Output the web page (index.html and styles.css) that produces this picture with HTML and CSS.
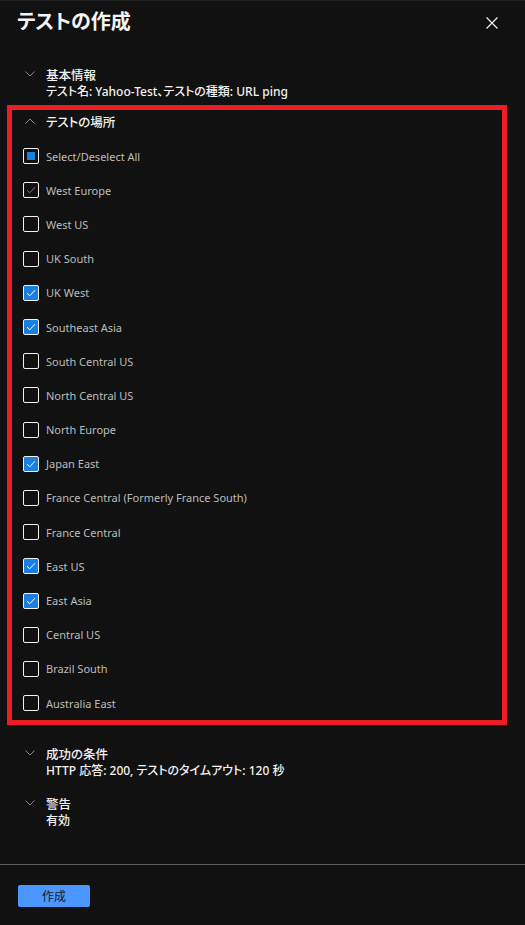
FILE: index.html
```html
<!DOCTYPE html>
<html lang="ja">
<head>
    <meta charset="UTF-8">
    <meta name="viewport" content="width=device-width, initial-scale=1.0">
    <title>テストの作成</title>
    <link rel="stylesheet" href="styles.css">
</head>
<body>
    <div class="panel">
        <div class="panel-header">
            <h1>テストの作成</h1>
            <button class="close" type="button" aria-label="閉じる">
                <svg width="12" height="12" viewBox="0 0 12 12">
                    <path d="M0.5 0.5 L11.5 11.5 M11.5 0.5 L0.5 11.5" stroke="#f2f2f2" stroke-width="1.2" fill="none"/>
                </svg>
            </button>
        </div>

        <div class="panel-body">
            <!-- 基本情報 -->
            <div class="section">
                <div class="section-title">
                    <svg class="chevron" width="10" height="6" viewBox="0 0 10 6"><path d="M0.5 0.5 L5 5 L9.5 0.5" stroke="#8a8a8a" fill="none"/></svg>
                    <span>基本情報</span>
                </div>
                <div class="section-summary">テスト名: Yahoo-Test、テストの種類: URL ping</div>
            </div>

            <!-- テストの場所 -->
            <div class="locations">
                <div class="section-title">
                    <svg class="chevron" width="10" height="6" viewBox="0 0 10 6"><path d="M0.5 5.5 L5 1 L9.5 5.5" stroke="#8a8a8a" fill="none"/></svg>
                    <span>テストの場所</span>
                </div>
                <ul class="checklist">
                    <li><span class="box partial"></span>Select/Deselect All</li>
                    <li><span class="box disabled"><svg width="12" height="12" viewBox="0 0 12 12"><path d="M2 6.2 L4.7 8.8 L10 3.2" stroke="#7a7a7a" stroke-width="1" fill="none"/></svg></span>West Europe</li>
                    <li><span class="box"></span>West US</li>
                    <li><span class="box"></span>UK South</li>
                    <li><span class="box checked"><svg width="12" height="12" viewBox="0 0 12 12"><path d="M2 6.2 L4.7 8.8 L10 3.2" stroke="#fff" stroke-width="1" fill="none"/></svg></span>UK West</li>
                    <li><span class="box checked"><svg width="12" height="12" viewBox="0 0 12 12"><path d="M2 6.2 L4.7 8.8 L10 3.2" stroke="#fff" stroke-width="1" fill="none"/></svg></span>Southeast Asia</li>
                    <li><span class="box"></span>South Central US</li>
                    <li><span class="box"></span>North Central US</li>
                    <li><span class="box"></span>North Europe</li>
                    <li><span class="box checked"><svg width="12" height="12" viewBox="0 0 12 12"><path d="M2 6.2 L4.7 8.8 L10 3.2" stroke="#fff" stroke-width="1" fill="none"/></svg></span>Japan East</li>
                    <li><span class="box"></span>France Central (Formerly France South)</li>
                    <li><span class="box"></span>France Central</li>
                    <li><span class="box checked"><svg width="12" height="12" viewBox="0 0 12 12"><path d="M2 6.2 L4.7 8.8 L10 3.2" stroke="#fff" stroke-width="1" fill="none"/></svg></span>East US</li>
                    <li><span class="box checked"><svg width="12" height="12" viewBox="0 0 12 12"><path d="M2 6.2 L4.7 8.8 L10 3.2" stroke="#fff" stroke-width="1" fill="none"/></svg></span>East Asia</li>
                    <li><span class="box"></span>Central US</li>
                    <li><span class="box"></span>Brazil South</li>
                    <li><span class="box"></span>Australia East</li>
                </ul>
            </div>

            <!-- 成功の条件 -->
            <div class="section spaced">
                <div class="section-title">
                    <svg class="chevron" width="10" height="6" viewBox="0 0 10 6"><path d="M0.5 0.5 L5 5 L9.5 0.5" stroke="#8a8a8a" fill="none"/></svg>
                    <span>成功の条件</span>
                </div>
                <div class="section-summary">HTTP 応答: 200, テストのタイムアウト: 120 秒</div>
            </div>

            <!-- 警告 -->
            <div class="section">
                <div class="section-title">
                    <svg class="chevron" width="10" height="6" viewBox="0 0 10 6"><path d="M0.5 0.5 L5 5 L9.5 0.5" stroke="#8a8a8a" fill="none"/></svg>
                    <span>警告</span>
                </div>
                <div class="section-summary">有効</div>
            </div>
        </div>

        <div class="panel-footer">
            <button class="primary" type="button">作成</button>
        </div>
    </div>
</body>
</html>
```

FILE: styles.css
```css
body {
    margin: 0;
    padding: 0;
    background-color: #111111;
    font-family: "Noto Sans", "Noto Sans CJK JP", sans-serif;
    font-feature-settings: "palt";
    color: #f0f0f0;
}

.panel {
    width: 525px;
    height: 925px;
    border-top: 1px solid #1e1e1e;
    box-sizing: border-box;
}

.panel-header {
    display: flex;
    justify-content: space-between;
    align-items: center;
    height: 40px;
    padding: 0 27px 0 17px;
}

h1 {
    margin: 0;
    font-size: 20px;
    font-weight: 700;
    line-height: 28px;
    color: #f4f4f4;
    font-family: "Noto Sans CJK JP", sans-serif;
}

.close {
    background: none;
    border: none;
    padding: 0;
    width: 12px;
    height: 12px;
    margin-top: 4px;
    cursor: pointer;
}

.close svg {
    display: block;
}

.panel-body {
    padding: 24px 0 0 0;
}

.section {
    padding-left: 25px;
    margin-bottom: 14px;
}

.section.spaced {
    margin-top: 19px;
}

.section-title {
    display: flex;
    align-items: center;
    height: 18px;
    font-size: 12.5px;
    font-weight: 500;
    color: #f2f2f2;
}

.chevron {
    width: 10px;
    margin-right: 11px;
}

.section-summary {
    padding-left: 21px;
    height: 18px;
    line-height: 18px;
    font-size: 12px;
    font-weight: 500;
    color: #f2f2f2;
}

.locations {
    margin: -10px 18px 0 7px;
    border: 5px solid #ee1c25;
    padding: 2px 0 0 13px;
}

.checklist {
    list-style: none;
    margin: 9px 0 0 0;
    padding: 0;
}

.checklist li {
    display: flex;
    align-items: center;
    height: 34.2px;
    margin-left: -2px;
    font-size: 11px;
    color: #bcbcbc;
}

.box {
    width: 16px;
    height: 16px;
    box-sizing: border-box;
    border: 1px solid #f2f2f2;
    border-radius: 2px;
    margin-right: 7px;
    display: flex;
    align-items: center;
    justify-content: center;
    flex-shrink: 0;
}

.box.partial::after {
    content: "";
    width: 8px;
    height: 8px;
    background-color: #1a7fe0;
}

.box.checked {
    background-color: #1a7fe0;
}

.box svg {
    display: block;
}

.panel-footer {
    margin-top: 34px;
    border-top: 1px solid #5f5f5f;
    padding: 19px 18px;
}

.primary {
    width: 72px;
    height: 22px;
    border: none;
    border-radius: 2px;
    background-color: #4c97ff;
    color: #1a1a1a;
    font-size: 12px;
    font-family: "Noto Sans CJK JP", sans-serif;
    padding: 0;
    cursor: pointer;
}
```
